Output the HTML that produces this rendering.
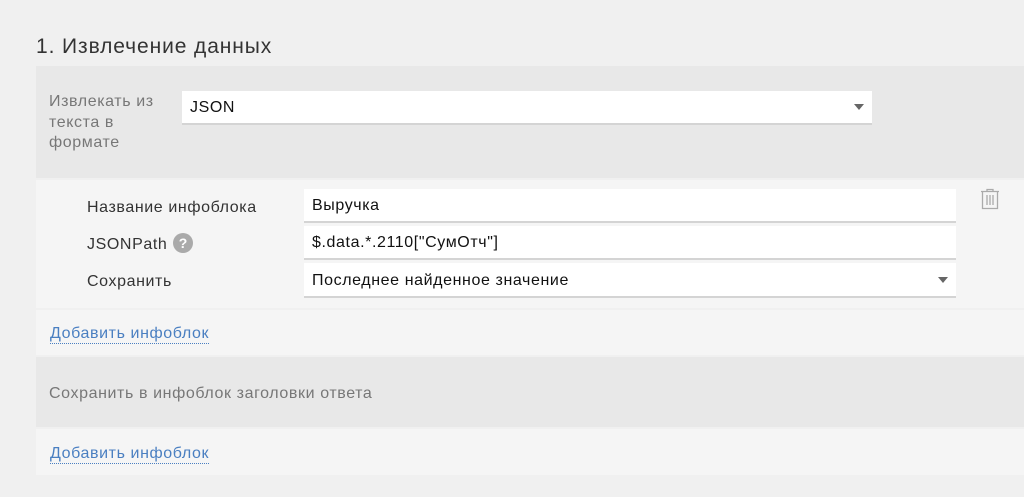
<!DOCTYPE html>
<html><head><meta charset="utf-8"><style>
*{box-sizing:border-box;margin:0;padding:0}
body{width:1024px;height:497px;background:#f0f0f0;font-family:"Liberation Sans",sans-serif;position:relative;overflow:hidden;color:#222;letter-spacing:0.6px}
.abs{position:absolute}
h1{position:absolute;left:36px;top:35px;font-size:21px;font-weight:normal;color:#333;letter-spacing:0.9px}
.blk{position:absolute;left:36px;right:0}
.inp{position:absolute;background:#fff;border-bottom:2px solid #d4d4d4;font-size:16px;padding-left:8px;padding-top:2px;color:#111;display:flex;align-items:center}
.lbl{position:absolute;font-size:16px;color:#333}
.link{position:absolute;left:50px;font-size:16px;color:#4a7fc1;border-bottom:1px dotted #4a7fc1;line-height:19px}
.arr{position:absolute;right:8px;top:50%;margin-top:-3px;width:0;height:0;border-left:5px solid transparent;border-right:5px solid transparent;border-top:6px solid #666}
</style></head><body>
<h1>1. Извлечение данных</h1>
<div class="blk" style="top:66px;height:112px;background:#e8e8e8"></div>
<div class="lbl" style="left:49px;top:92px;color:#777;line-height:20.5px">Извлекать из<br>текста в<br>формате</div>
<div class="inp" style="left:182px;top:91px;width:690px;height:34px;">JSON<span class="arr"></span></div>
<div class="blk" style="top:180px;height:128px;background:#f5f5f5"></div>
<div class="lbl" style="left:87px;top:199px">Название инфоблока</div>
<div class="lbl" style="left:87px;top:236px">JSONPath</div>
<div class="abs" style="left:173px;top:233px;width:20px;height:20px;border-radius:50%;background:#aaa;color:#fff;font-size:14px;font-weight:bold;text-align:center;line-height:20px;letter-spacing:0">?</div>
<div class="lbl" style="left:87px;top:273px">Сохранить</div>
<div class="inp" style="left:304px;top:189px;width:652px;height:34px">Выручка</div>
<div class="inp" style="left:304px;top:226px;width:652px;height:34px">$.data.*.2110["СумОтч"]</div>
<div class="inp" style="left:304px;top:263px;width:652px;height:35px">Последнее найденное значение<span class="arr"></span></div>
<svg class="abs" style="left:980px;top:188px" width="20" height="22" viewBox="0 0 20 22" fill="none" stroke="#aaa" stroke-width="1.3"><path d="M1 3.5H19M7 3.5V1.5H13V3.5M2.5 3.5V20.5H17.5V3.5M7 7V17M10 7V17M13 7V17"/></svg>
<div class="blk" style="top:310px;height:45px;background:#f5f5f5"></div>
<div class="link" style="top:324px">Добавить инфоблок</div>
<div class="blk" style="top:357px;height:70px;background:#e8e8e8"></div>
<div class="lbl" style="left:49px;top:385px;color:#777">Сохранить в инфоблок заголовки ответа</div>
<div class="blk" style="top:429px;height:46px;background:#f5f5f5"></div>
<div class="link" style="top:444px">Добавить инфоблок</div>
</body></html>
